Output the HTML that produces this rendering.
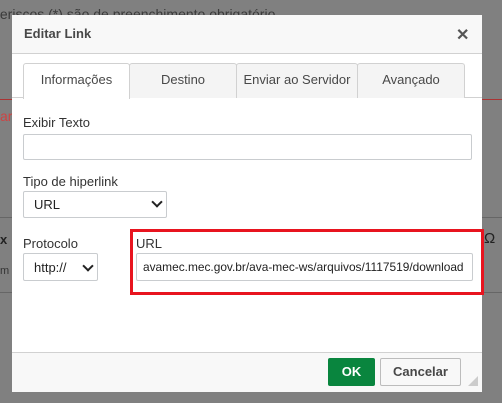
<!DOCTYPE html>
<html><head><style>
body{margin:0;width:502px;height:403px;background:#808080;position:relative;overflow:hidden;font-family:"Liberation Sans",Arial,sans-serif;font-size:13px;color:#333}
.a{position:absolute}
.inp{position:absolute;background:#fff;border:1px solid #c9cccf;border-radius:2px;box-sizing:border-box;overflow:hidden}
.tab{position:absolute;top:63px;height:35px;box-sizing:border-box;border:1px solid #d1d1d1;border-bottom:none;background:#f4f4f4;text-align:center;line-height:32px;border-radius:3px 3px 0 0;color:#484848}
.chev{position:absolute;width:6px;height:6px;border-right:2px solid #222;border-bottom:2px solid #222;transform:rotate(45deg)}
</style></head><body>
<div class="a" style="left:-4px;top:6px;color:#3a3a3a;font-size:14px">teriscos (*) são de preenchimento obrigatório</div>
<div class="a" style="left:0;top:99px;width:502px;height:1px;background:#a33"></div>
<div class="a" style="left:0;top:108px;color:#c44;font-size:14px">ar</div>
<div class="a" style="left:0;top:217px;width:502px;height:1px;background:#666"></div>
<div class="a" style="left:0;top:292px;width:502px;height:1px;background:#666"></div>
<div class="a" style="left:0;top:232px;font-weight:bold;color:#222">x</div>
<div class="a" style="left:0;top:265px;color:#333;font-size:11px">m</div>
<div class="a" style="left:484px;top:230px;color:#222;font-size:15px">Ω</div>

<div class="a" style="left:12px;top:15px;width:470px;height:376px;background:#fff"></div>
<div class="a" style="left:12px;top:15px;width:470px;height:38px;background:#f8f8f8;border-bottom:1px solid #d1d1d1"></div>
<div class="a" style="left:24px;top:26px;font-weight:bold;color:#484848;font-size:13px">Editar Link</div>
<div class="a" style="left:456px;top:25px;font-size:16px;font-weight:bold;color:#555">✕</div>

<div class="a" style="left:12px;top:97px;width:470px;height:1px;background:#d1d1d1"></div>
<div class="tab" style="left:23px;width:107px;background:#fff;height:36px">Informações</div>
<div class="tab" style="left:129px;width:108px">Destino</div>
<div class="tab" style="left:236px;width:122px">Enviar ao Servidor</div>
<div class="tab" style="left:357px;width:108px">Avançado</div>

<div class="a" style="left:23px;top:115px">Exibir Texto</div>
<div class="inp" style="left:23px;top:134px;width:449px;height:26px"></div>
<div class="a" style="left:23px;top:174px">Tipo de hiperlink</div>
<div class="inp" style="left:23px;top:191px;width:144px;height:27px"><span class="a" style="left:10px;top:5px;color:#222">URL</span><div class="chev" style="left:129px;top:6px"></div></div>
<div class="a" style="left:23px;top:236px;font-size:13px">Protocolo</div>
<div class="inp" style="left:23px;top:253px;width:75px;height:28px"><span class="a" style="left:10px;top:6px;color:#222">http://</span><div class="chev" style="left:60px;top:8px"></div></div>

<div class="a" style="left:130px;top:229px;width:354px;height:66px;box-sizing:border-box;border:3px solid #e8141f"></div>
<div class="a" style="left:136px;top:236px">URL</div>
<div class="inp" style="left:136px;top:253px;width:337px;height:28px"><span class="a" style="left:6px;top:6px;color:#222;white-space:nowrap;font-size:11.9px">avamec.mec.gov.br/ava-mec-ws/arquivos/1117519/download</span></div>

<div class="a" style="left:12px;top:352px;width:470px;height:39px;background:#f8f8f8;border-top:1px solid #d1d1d1"></div>
<div class="a" style="left:328px;top:358px;width:47px;height:28px;background:#09853e;border-radius:2px;color:#fff;font-weight:bold;text-align:center;line-height:28px">OK</div>
<div class="a" style="left:380px;top:358px;width:81px;height:28px;box-sizing:border-box;border:1px solid #bcbcbc;background:#f8f8f8;border-radius:2px;color:#484848;font-weight:bold;text-align:center;line-height:26px">Cancelar</div>
<div class="a" style="left:468px;top:376px;width:0;height:0;border-left:10px solid transparent;border-bottom:10px solid #ccc"></div>
</body></html>
